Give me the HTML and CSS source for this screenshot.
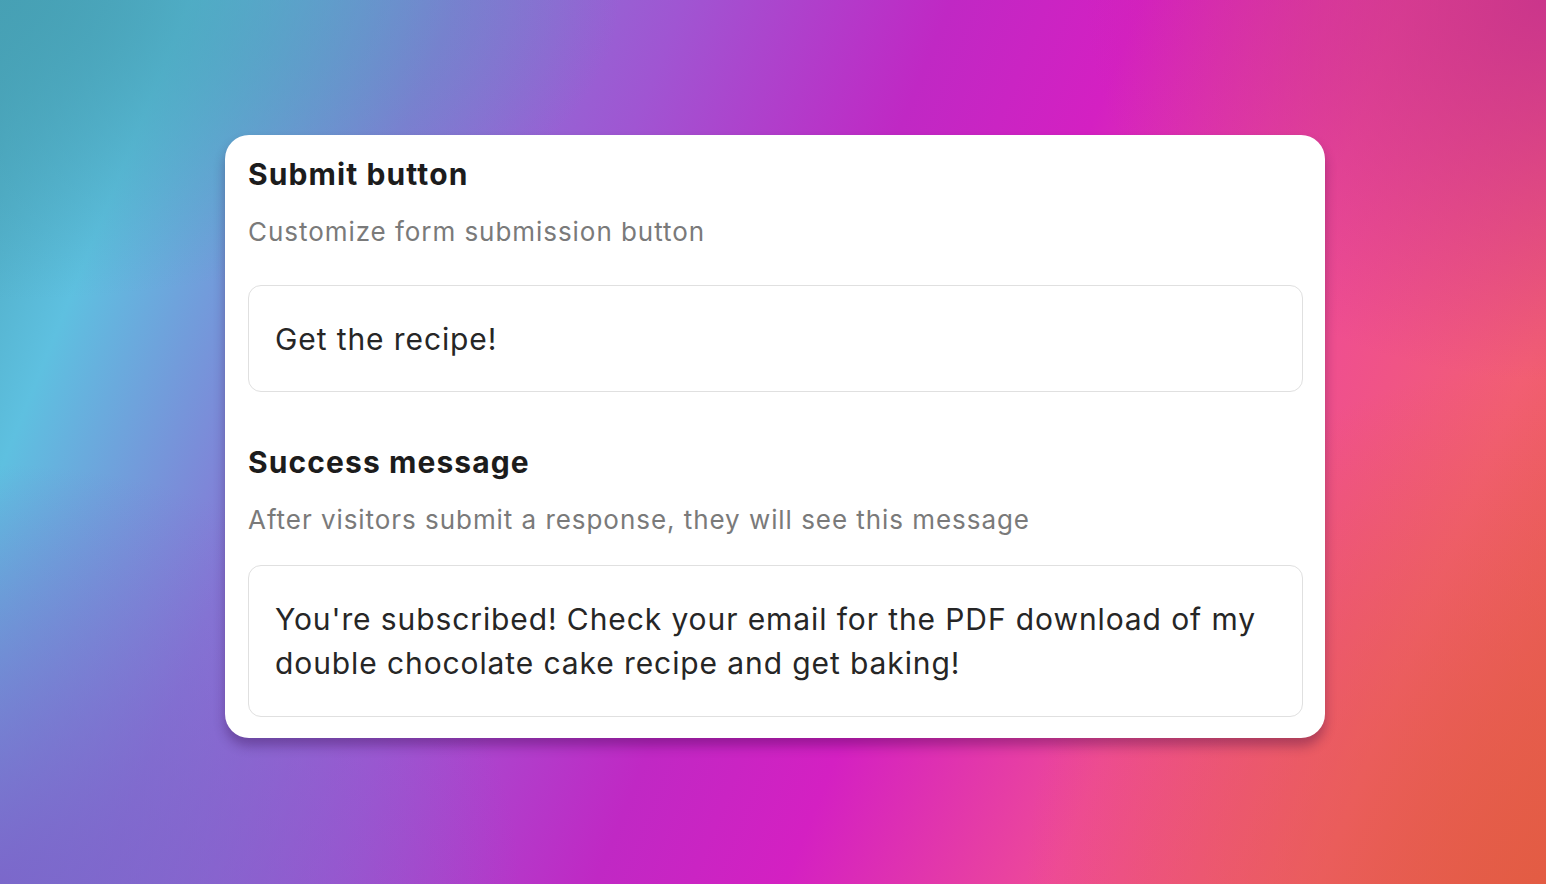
FILE: index.html
```html
<!DOCTYPE html>
<html lang="en">
<head>
<meta charset="utf-8">
<title>Form settings</title>
<link rel="stylesheet" href="styles.css">
</head>
<body>
<main class="stage">
  <section class="card">
    <h2 class="title">Submit button</h2>
    <p class="hint">Customize form submission button</p>
    <div class="field field-single">Get the recipe!</div>
    <h2 class="title title-second">Success message</h2>
    <p class="hint">After visitors submit a response, they will see this message</p>
    <div class="field field-multi">You're subscribed! Check your email for the PDF download of my double chocolate cake recipe and get baking!</div>
  </section>
</main>
</body>
</html>
```

FILE: styles.css
```css
html, body {
  margin: 0;
  padding: 0;
}
body {
  width: 1546px;
  height: 884px;
  overflow: hidden;
  font-family: Inter, "Noto Sans", sans-serif;
  background:
    radial-gradient(ellipse 520px 420px at 0% 100%, rgba(124, 96, 200, 0.85), rgba(124, 96, 200, 0) 100%),
    radial-gradient(ellipse 620px 300px at 0% 0%, rgba(70, 160, 180, 0.9), rgba(70, 160, 180, 0) 100%),
    radial-gradient(ellipse 520px 520px at 100% 100%, rgba(226, 92, 66, 0.85), rgba(226, 92, 66, 0) 100%),
    radial-gradient(ellipse 460px 380px at 100% 0%, rgba(196, 48, 140, 0.85), rgba(196, 48, 140, 0) 100%),
    linear-gradient(112deg, #4aa3b8 0%, #5ec0e0 10%, #8678d6 24%, #a055d2 36%, #c028c4 50%, #d420c2 60%, #ee4a98 74%, #f25e74 88%, #e85c4c 100%);
}
.stage {
  box-sizing: border-box;
  height: 884px;
  padding: 135px 0 0 225px;
}
.card {
  box-sizing: border-box;
  width: 1100px;
  height: 603px;
  background: #ffffff;
  border-radius: 24px;
  padding: 19px 22px 21px 23px;
  box-shadow: 0 8px 12px rgba(40, 0, 60, 0.32);
}
.title {
  margin: 0;
  font-size: 30px;
  line-height: 40px;
  font-weight: 700;
  color: #1c1c1c;
  letter-spacing: 1.1px;
}
.title-second {
  margin-top: 50px;
}
.hint {
  margin: 20px 0 0;
  font-size: 26px;
  line-height: 36px;
  font-weight: 400;
  color: #7a7a7a;
  letter-spacing: 0.95px;
}
.field {
  box-sizing: border-box;
  border: 1.5px solid #e0e0e0;
  border-radius: 13px;
  padding: 31px 26px 30px;
  font-size: 30px;
  line-height: 44px;
  color: #262626;
  letter-spacing: 0.9px;
}
.field-single {
  margin-top: 35px;
  height: 107px;
}
.field-multi {
  margin-top: 27px;
  height: 152px;
}
```
